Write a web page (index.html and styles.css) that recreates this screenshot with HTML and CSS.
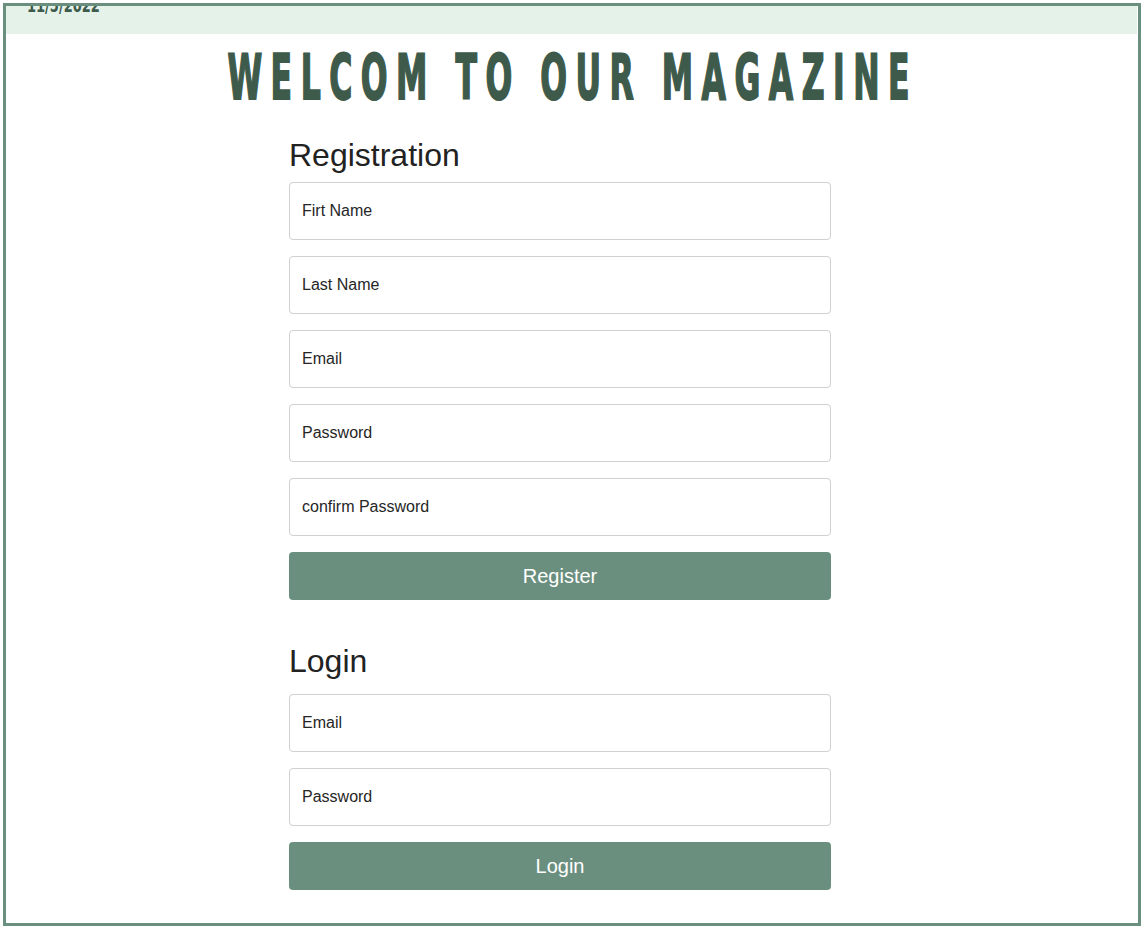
FILE: index.html
```html
<!DOCTYPE html>
<html>
<head>
<meta charset="utf-8">
<link rel="stylesheet" href="styles.css">
</head>
<body>
<div class="frame">
  <header class="topbar"><span class="date">11/5/2022</span></header>
  <h1 class="title"><span class="title-text">WELCOM TO OUR MAGAZINE</span></h1>
  <main class="forms">
    <section class="form">
      <h2 class="form-title">Registration</h2>
      <input class="field" type="text" placeholder="Firt Name">
      <input class="field" type="text" placeholder="Last Name">
      <input class="field" type="text" placeholder="Email">
      <input class="field" type="text" placeholder="Password">
      <input class="field" type="text" placeholder="confirm Password">
      <button class="btn">Register</button>
    </section>
    <section class="form login">
      <h2 class="form-title">Login</h2>
      <input class="field" type="text" placeholder="Email">
      <input class="field" type="text" placeholder="Password">
      <button class="btn">Login</button>
    </section>
  </main>
</div>
</body>
</html>
```
FILE: styles.css
```css
* { box-sizing: border-box; }
html, body { margin: 0; padding: 0; background: #fff; }
body { font-family: "Liberation Sans", Arial, sans-serif; }
.frame {
  margin: 3px 7px 3px 3px;
  width: 1138px;
  height: 923px;
  border: 3px solid #6b8f7e;
  overflow: hidden;
}
.topbar {
  height: 28px;
  background: #e4f2e9;
  margin-right: 1px;
  overflow: hidden;
  position: relative;
}
.date {
  position: absolute;
  left: 21px;
  top: -13px;
  display: inline-block;
  transform: scaleX(0.65);
  transform-origin: left center;
  font-family: "DejaVu Sans", sans-serif;
  font-weight: bold;
  font-size: 20px;
  color: #3d5a4b;
}
.title {
  margin: 12px 0 0;
  padding-right: 15px;
  height: 64px;
  display: flex;
  justify-content: center;
  font-family: "DejaVu Sans", sans-serif;
  font-weight: bold;
  font-size: 63px;
  line-height: 64px;
  color: #3d5a4b;
  white-space: nowrap;
}
.title-text {
  display: inline-block;
  flex: none;
  letter-spacing: 17px;
  margin-right: -17px;
  transform: scaleX(0.5);
  transform-origin: center;
  -webkit-text-stroke: 2px #3d5a4b;
}
.forms {
  width: 542px;
  margin: 0 0 0 283px;
  display: flex;
  flex-direction: column;
}
.form { display: flex; flex-direction: column; }
.form-title {
  margin: 27px 0 9px;
  font-weight: normal;
  font-size: 32px;
  line-height: 36px;
  color: #222;
}
.login .form-title { margin: 43px 0 15px; }
.field {
  height: 58px;
  margin-bottom: 16px;
  border: 1px solid #d0d0d0;
  border-radius: 4px;
  padding: 0 12px;
  font-family: "Liberation Sans", Arial, sans-serif;
  font-size: 16px;
  color: #222;
  outline: none;
}
.field::placeholder { color: #262626; }
.btn {
  height: 48px;
  border: none;
  border-radius: 4px;
  background: #6b8f7e;
  color: #fff;
  font-family: "Liberation Sans", Arial, sans-serif;
  font-size: 20px;
}
```
